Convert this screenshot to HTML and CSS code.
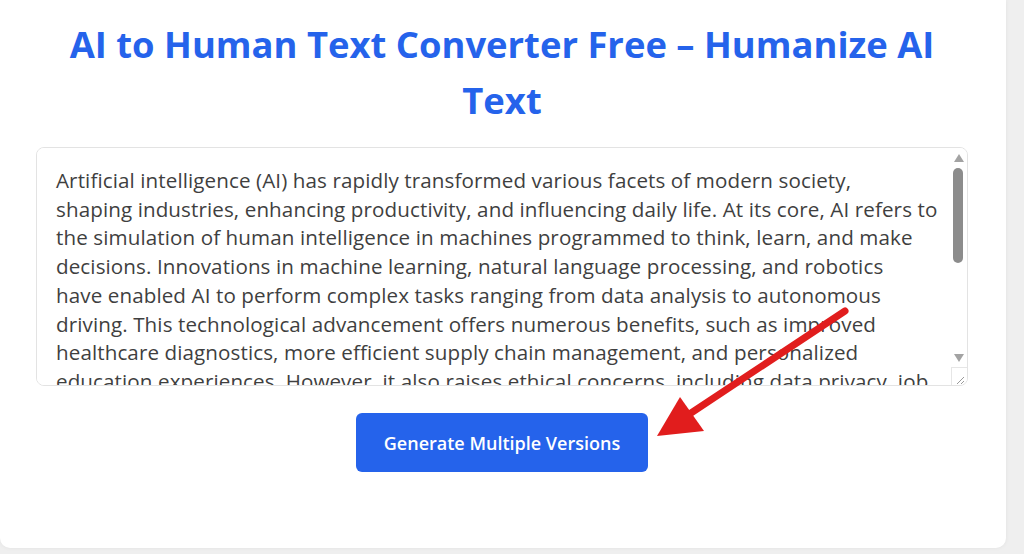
FILE: index.html
```html
<!DOCTYPE html>
<html lang="en">
<head>
<meta charset="utf-8">
<title>AI to Human Text Converter Free</title>
<link rel="stylesheet" href="styles.css">
</head>
<body>
<main class="page">
  <section class="card">
    <h1 class="title">AI to Human Text Converter Free – Humanize AI Text</h1>
    <div class="box">
      <textarea class="input" spellcheck="false">Artificial intelligence (AI) has rapidly transformed various facets of modern society,
shaping industries, enhancing productivity, and influencing daily life. At its core, AI refers to
the simulation of human intelligence in machines programmed to think, learn, and make
decisions. Innovations in machine learning, natural language processing, and robotics
have enabled AI to perform complex tasks ranging from data analysis to autonomous
driving. This technological advancement offers numerous benefits, such as improved
healthcare diagnostics, more efficient supply chain management, and personalized
education experiences. However, it also raises ethical concerns, including data privacy, job
displacement, and algorithmic bias. As AI continues to evolve, it is essential for
policymakers, businesses, and individuals to collaborate on frameworks that ensure its
responsible development. Balancing innovation with accountability will determine
whether AI becomes a force that benefits everyone or deepens existing inequalities.
Ultimately, the future of AI depends on the choices we make today.</textarea>
      <div class="scrollbar" aria-hidden="true">
        <div class="sb-btn sb-up"><span class="tri tri-up"></span></div>
        <div class="sb-thumb"></div>
        <div class="sb-track"></div>
        <div class="sb-btn sb-down"><span class="tri tri-down"></span></div>
        <div class="sb-resizer">
          <svg width="16" height="18" viewBox="0 0 16 18">
            <line x1="13" y1="10" x2="6" y2="17" stroke="#9a9a9a" stroke-width="1"/>
            <line x1="13" y1="14" x2="10" y2="17" stroke="#9a9a9a" stroke-width="1"/>
          </svg>
        </div>
      </div>
    </div>
    <button class="generate" type="button">Generate Multiple Versions</button>
    <svg class="arrow" width="1024" height="554" viewBox="0 0 1024 554" aria-hidden="true">
      <line x1="845" y1="311" x2="688" y2="415" stroke="#e11d1d" stroke-width="7" stroke-linecap="round"/>
      <polygon points="657,436 680,397 704,431" fill="#e11d1d"/>
    </svg>
  </section>
</main>
</body>
</html>
```

FILE: styles.css
```css
html, body {
  margin: 0;
  padding: 0;
}

body {
  background: #efefef;
  font-family: "Open Sans", "Noto Sans", sans-serif;
  width: 1024px;
  height: 554px;
  overflow: hidden;
}

.page {
  padding-bottom: 6px;
}

.card {
  position: relative;
  width: 1006px;
  box-sizing: border-box;
  background: #ffffff;
  border-radius: 0 0 10px 10px;
  box-shadow: 0 0 4px rgba(0, 0, 0, 0.06);
  padding: 16px 38px 76px 36px;
  display: flex;
  flex-direction: column;
  align-items: center;
}

.title {
  margin: 0;
  padding: 0 20px;
  text-align: center;
  font-family: "Open Sans", "Noto Sans", sans-serif;
  font-weight: 700;
  font-size: 36.4px;
  line-height: 56px;
  color: #2563eb;
}

.box {
  margin-top: 19px;
  width: 100%;
  height: 239px;
  box-sizing: border-box;
  border: 1px solid #e3e3e3;
  border-radius: 8px;
  overflow: hidden;
  display: flex;
  background: #ffffff;
}

.input {
  flex: 1;
  min-width: 0;
  height: 100%;
  box-sizing: border-box;
  border: none;
  padding: 18px 0 0 19px;
  margin: 0;
  font-family: "Open Sans", "Noto Sans", sans-serif;
  font-size: 20.6px;
  letter-spacing: 0.1px;
  line-height: 28.7px;
  color: #3f3f3f;
  background: #ffffff;
  resize: none;
  outline: none;
  overflow: hidden;
  white-space: pre;
}

.scrollbar {
  width: 16px;
  flex: none;
  display: flex;
  flex-direction: column;
  align-items: center;
  background: #ffffff;
}

.sb-btn {
  width: 16px;
  display: flex;
  justify-content: center;
  align-items: center;
}

.sb-up {
  height: 19px;
}

.sb-down {
  height: 18px;
}

.tri {
  width: 0;
  height: 0;
  margin-right: 1px;
  border-left: 5.5px solid transparent;
  border-right: 5.5px solid transparent;
}

.tri-up {
  border-bottom: 8px solid #a3a3a3;
}

.tri-down {
  border-top: 8px solid #a3a3a3;
}

.sb-thumb {
  margin-top: 1px;
  width: 10px;
  height: 95px;
  border-radius: 5px;
  background: #8c8c8c;
  margin-right: 2px;
}

.sb-track {
  flex: 1;
}

.sb-resizer {
  width: 16px;
  height: 18px;
  box-sizing: border-box;
  border-top: 1px solid #e6e6e6;
  border-left: 1px solid #e6e6e6;
  display: flex;
}

.sb-resizer svg {
  display: block;
  margin: -1px 0 0 -1px;
}

.generate {
  margin-top: 27px;
  width: 292px;
  height: 59px;
  border: none;
  border-radius: 6px;
  background: #2563eb;
  color: #ffffff;
  font-family: "Open Sans", "Noto Sans", sans-serif;
  font-weight: 600;
  font-size: 18px;
  cursor: pointer;
}

.arrow {
  position: absolute;
  left: 0;
  top: 0;
  pointer-events: none;
}
```
